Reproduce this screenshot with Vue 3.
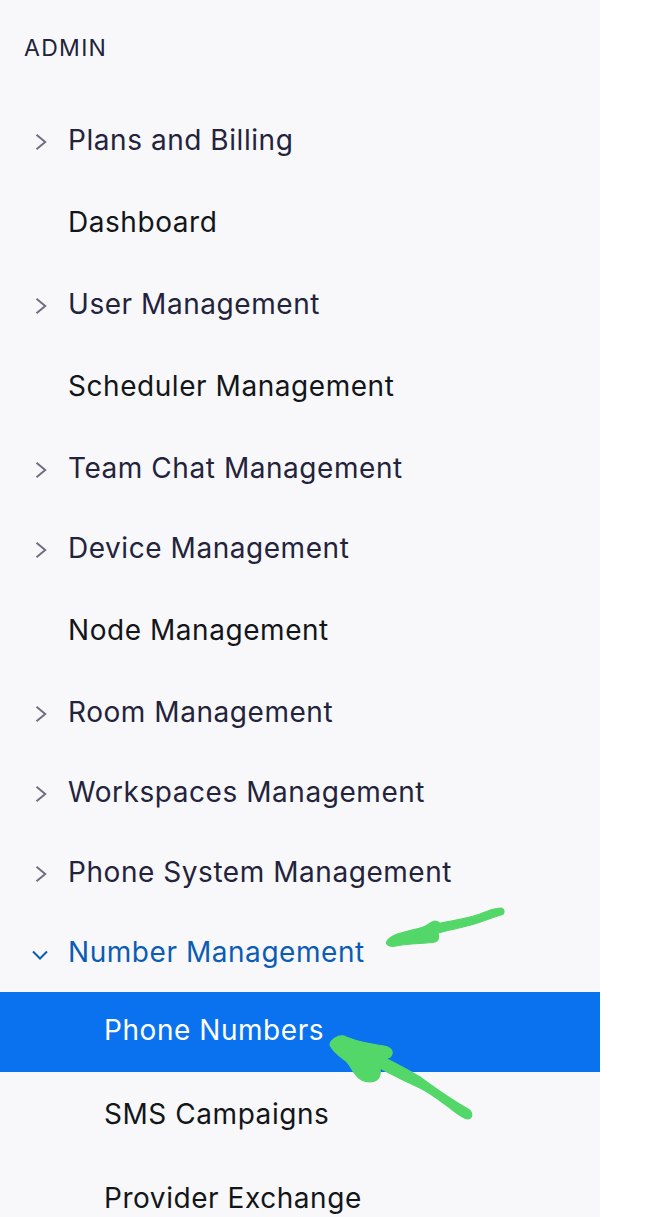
<script setup>
const items = [
    { label: 'Plans and Billing', icon: 'right' },
    { label: 'Dashboard' },
    { label: 'User Management', icon: 'right' },
    { label: 'Scheduler Management' },
    { label: 'Team Chat Management', icon: 'right' },
    { label: 'Device Management', icon: 'right' },
    { label: 'Node Management' },
    { label: 'Room Management', icon: 'right' },
    { label: 'Workspaces Management', icon: 'right' },
    { label: 'Phone System Management', icon: 'right' },
    { label: 'Number Management', icon: 'down' }
];

const children = [
    { label: 'Phone Numbers', active: true },
    { label: 'SMS Campaigns' },
    { label: 'Provider Exchange' }
];
</script>

<template>
    <div class="page">
        <aside class="sidebar">
            <div class="section-title">ADMIN</div>
            <ul class="menu">
                <li
                    v-for="item in items"
                    :key="item.label"
                    class="menu-item"
                    :class="{ 'menu-item--parent': item.icon, 'menu-item--open': item.icon === 'down' }"
                >
                    <svg v-if="item.icon === 'right'" class="chevron" viewBox="0 0 12 16">
                        <path d="M1.5 0.8 L10.2 8 L1.5 15.2" />
                    </svg>
                    <svg v-else-if="item.icon === 'down'" class="chevron chevron--down" viewBox="0 0 16 12">
                        <path d="M1 1.5 L8 8.5 L15 1.5" />
                    </svg>
                    <span>{{ item.label }}</span>
                </li>
                <li
                    v-for="child in children"
                    :key="child.label"
                    class="sub-item"
                    :class="{ 'sub-item--active': child.active }"
                >
                    {{ child.label }}
                </li>
            </ul>
        </aside>

        <!-- hand drawn arrows on top of the screenshot -->
        <svg class="marks" viewBox="0 0 659 1217">
            <path d="M387 941 C392 934 404 932 420 928 C427 927 431 921 435 921 C439 921 439 924 441 923 C456 920 470 918 480 914 C489 910 497 908 501 908 C505 909 505 914 501 915 C490 918 478 924 463 927 C455 929 445 931 438 933 C439 937 439 941 435 942 C425 944 410 943 396 946 C390 947 385 945 387 941 Z" />
            <path d="M330 1045 C330 1040 338 1035 344 1036 C352 1040 370 1044 384 1046 C391 1047 394 1052 391 1056 C390 1058 387 1058 385 1058 C397 1064 410 1071 420 1077 C435 1088 452 1100 468 1109 C473 1112 473 1118 468 1119 C462 1119 452 1109 443 1103 C435 1097 428 1092 420 1088 C407 1082 392 1075 380 1068 C381 1073 380 1079 375 1081 C368 1083 361 1081 356 1075 C352 1071 351 1066 347 1062 C341 1057 333 1052 330 1045 Z" />
        </svg>
    </div>
</template>

<style scoped>
.page {
    position: relative;
    width: 659px;
    height: 1217px;
    overflow: hidden;
    background: #fff;
    font-family: Inter, "Liberation Sans", sans-serif;
}

.sidebar {
    width: 600px;
    height: 100%;
    background: #f8f8fb;
}

.section-title {
    height: 100px;
    padding: 34px 0 0 24px;
    box-sizing: border-box;
    font-size: 23px;
    line-height: 28px;
    letter-spacing: 1.3px;
    color: #22223a;
}

.menu {
    list-style: none;
    margin: 0;
    padding: 0;
}

.menu-item {
    position: relative;
    display: flex;
    align-items: center;
    height: 84px;
    padding-left: 68px;
    font-size: 28px;
    font-weight: 420;
    letter-spacing: 0.55px;
    color: #131619;
}

.menu-item--parent {
    height: 80px;
    color: #23233b;
}

.menu-item--open {
    color: #0b5cb5;
}

.chevron {
    position: absolute;
    left: 35px;
    top: 34px;
    width: 12px;
    height: 16px;
    fill: none;
    stroke: #6e6e80;
    stroke-width: 2;
}

.chevron--down {
    left: 32px;
    top: 38px;
    width: 16px;
    height: 12px;
    stroke: #0b5cb5;
}

.sub-item {
    display: flex;
    align-items: center;
    height: 84px;
    padding-left: 104px;
    font-size: 28px;
    font-weight: 420;
    letter-spacing: 0.55px;
    color: #131619;
}

.sub-item--active {
    height: 80px;
    padding-bottom: 4px;
    box-sizing: border-box;
    background: #0b72ef;
    color: #fff;
}

.marks {
    position: absolute;
    inset: 0;
    width: 659px;
    height: 1217px;
    fill: #53d769;
    stroke: #53d769;
    stroke-width: 1.2;
    stroke-linejoin: round;
    pointer-events: none;
}
</style>
